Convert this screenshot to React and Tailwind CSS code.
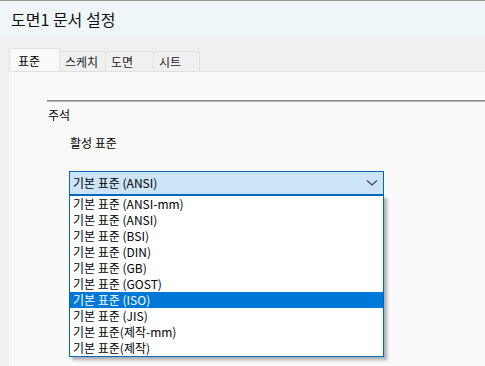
import React from "react";

const items = [
  "기본 표준 (ANSI-mm)",
  "기본 표준 (ANSI)",
  "기본 표준 (BSI)",
  "기본 표준 (DIN)",
  "기본 표준 (GB)",
  "기본 표준 (GOST)",
  "기본 표준 (ISO)",
  "기본 표준 (JIS)",
  "기본 표준(제작-mm)",
  "기본 표준(제작)",
];

const font = { fontFamily: '"Noto Sans CJK KR", "Noto Sans", sans-serif' };

const Tab = ({ label, active, w }) => (
  <div
    className={
      active
        ? "h-[24px] bg-[#f9f9f9] border border-b-0 border-[#e1e1e1] flex items-center pl-[8px] text-[12px] text-black"
        : "h-[21px] bg-[#f0f0f0] border border-b-0 border-l-0 border-[#e1e1e1] flex items-center pl-[5px] text-[12px] text-[#1a1a1a]"
    }
    style={{ width: w }}
  >
    {label}
  </div>
);

export default function App() {
  return (
    <div className="w-[485px] h-[366px] bg-[#f0f0f0] overflow-hidden flex flex-col" style={font}>
      {/* title */}
      <div className="h-[37px] border-t border-[#9c9c9c] bg-[#eef6f8] flex items-center pl-[11px] text-[16px] text-[#111]">
        도면1 문서 설정
      </div>

      {/* tabs */}
      <div className="pt-[11px] pl-[9px] flex items-end">
        <Tab label="표준" active w={51} />
        <Tab label="스케치" w={46} />
        <Tab label="도면" w={48} />
        <Tab label="시트" w={46} />
      </div>

      {/* page */}
      <div className="flex-1 ml-[9px] bg-[#f9f9f9] border-t border-[#e1e1e1] -mt-px pt-[28px]">
        <div className="ml-[38px] h-[2px] border-t border-[#8a8a8a] bg-[#b4b4b4]" />
        <div className="ml-[39px] mt-[5px] text-[12px] leading-[16px] text-black">주석</div>
        <div className="ml-[61px] mt-[12px] text-[12px] leading-[16px] text-black">활성 표준</div>

        <div className="relative ml-[60px] mt-[20px] w-[315px]">
          <div className="h-[24px] border border-[#0067c0] bg-[#cce4f7] flex items-center justify-between pl-[3px] pr-[5px] text-[12px] text-black">
            <span>기본 표준 (ANSI)</span>
            <svg width="12" height="8" viewBox="0 0 12 8">
              <path d="M1 1.5 L6 6 L11 1.5" fill="none" stroke="#444" strokeWidth="1.2" />
            </svg>
          </div>
          <div className="absolute left-0 top-[24px] w-[315px] bg-white border border-[#0067c0] shadow-[3px_3px_3px_rgba(0,0,0,0.3)]">
            {items.map((t) => (
              <div
                key={t}
                className={
                  t === "기본 표준 (ISO)"
                    ? "h-[16px] leading-[16px] pl-[3px] text-[12px] bg-[#0078d7] text-white"
                    : "h-[16px] leading-[16px] pl-[3px] text-[12px] text-black"
                }
              >
                {t}
              </div>
            ))}
          </div>
        </div>
      </div>
    </div>
  );
}
